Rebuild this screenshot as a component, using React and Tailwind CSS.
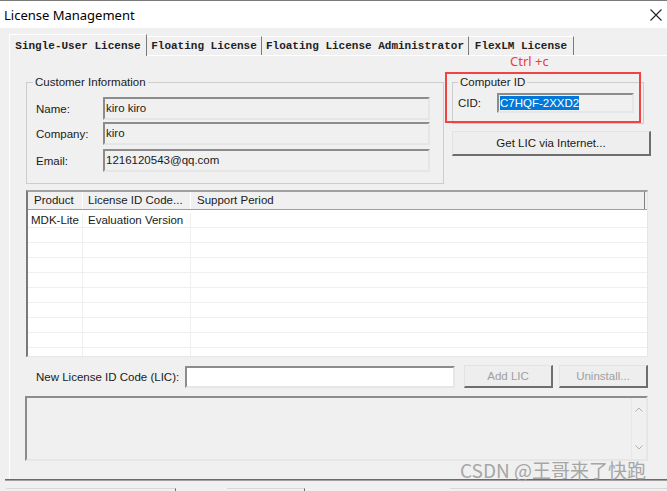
import React from 'react';

// Win32-style edges
const sunken =
  'border-2 border-t-[#8c8c8c] border-l-[#8c8c8c] border-r-[#e6e6e6] border-b-[#e6e6e6]';
const raised =
  'border border-t-[#e3e3e3] border-l-[#e3e3e3] border-r-2 border-b-2 border-r-[#6e6e6e] border-b-[#6e6e6e] bg-[#eeeeee]';

const TABS = [
  { label: 'Single-User License', cls: 'w-[138px] h-[22px] mb-[-1px] relative z-10 bg-[#f0f0f0] border-l border-l-white' },
  { label: 'Floating License', cls: 'w-[115px] h-[19px]' },
  { label: 'Floating License Administrator', cls: 'w-[207px] h-[19px]' },
  { label: 'FlexLM License', cls: 'w-[105px] h-[19px]' },
];

const ROWS = Array.from({ length: 10 }, (_, i) =>
  i === 0 ? ['MDK-Lite', 'Evaluation Version', ''] : ['', '', '']
);

const Field = ({ label, value }) => (
  <div className="flex h-[23px] items-center">
    <span className="w-[67px]">{label}</span>
    <div className={`h-[23px] w-[327px] pl-[1px] pt-[2px] ${sunken}`}>{value}</div>
  </div>
);

export default function App() {
  return (
    <div className="relative h-[491px] w-[667px] overflow-hidden bg-[#f0f0f0] font-['Liberation_Sans',Arial,sans-serif] text-[11.5px] leading-[14px] text-[#1a1a1a]">
      {/* title bar */}
      <div className="flex h-[28px] items-center justify-between border-t border-[#7a7a7a] bg-white pl-[4px] pr-[4px]">
        <span className="font-['Noto_Sans',sans-serif] text-[13px] text-black">License Management</span>
        <svg width="12" height="12" viewBox="0 0 12 12" className="mr-[1px] mt-[1px]">
          <path d="M0.5 0.5L11.5 11.5M11.5 0.5L0.5 11.5" stroke="#222" strokeWidth="1.1" />
        </svg>
      </div>

      {/* tab strip */}
      <div className="mt-[6px] flex h-[21px] items-end pl-[9px]">
        {TABS.map((t) => (
          <div
            key={t.label}
            className={`flex items-center justify-center border-t border-t-white border-r border-r-[#7a7a7a] font-['Liberation_Mono',monospace] text-[11px] font-semibold text-[#222] ${t.cls}`}
          >
            {t.label}
          </div>
        ))}
      </div>

      {/* tab page */}
      <div className="ml-[9px] h-[424px] border-l border-t border-white pl-[16px] pt-[19px]">
        <div className="flex items-start gap-[8px]">
          <fieldset className="h-[109px] w-[418px] border border-[#cdcdcd] pl-[9px] pt-[8px]">
            <legend className="ml-[-3px] px-[2px]">Customer Information</legend>
            <Field label="Name:" value="kiro kiro" />
            <div className="mt-[2px]">
              <Field label="Company:" value="kiro" />
            </div>
            <div className="mt-[4px]">
              <Field label="Email:" value="1216120543@qq.com" />
            </div>
          </fieldset>

          <div className="flex w-[199px] flex-col">
            <fieldset className="h-[49px] w-[192px] border border-[#cdcdcd] pl-[5px] pt-[4px]">
              <legend className="ml-0 px-[2px]">Computer ID</legend>
              <div className="flex items-center">
                <span className="w-[39px]">CID:</span>
                <div className={`h-[20px] w-[137px] pl-[1px] pt-[1px] ${sunken}`}>
                  <span className="bg-[#0078d7] py-[1px] text-white">C7HQF-2XXD2</span>
                </div>
              </div>
            </fieldset>
            <button className={`mt-[7px] h-[25px] w-[199px] text-[#1a1a1a] ${raised}`}>
              Get LIC via Internet...
            </button>
          </div>
        </div>

        {/* license list */}
        <div className="mt-[6px] h-[167px] w-[622px] overflow-hidden border-l-2 border-t-2 border-r border-b border-l-[#7a7a7a] border-t-[#a0a0a0] border-r-[#e6e6e6] border-b-[#e6e6e6] bg-white">
          <div className="flex h-[18px] border-b border-[#a0a0a0] bg-[#f0f0f0]">
            <div className="w-[55px] border-r border-white pl-[6px] pt-[1px]">Product</div>
            <div className="w-[108px] border-r border-white pl-[5px] pt-[1px]">License ID Code...</div>
            <div className="flex-1 border-r border-[#808080] pl-[6px] pt-[1px] mr-[2px]">Support Period</div>
          </div>
          <div className="mt-[3px]">
            {ROWS.map((r, i) => (
              <div key={i} className="flex h-[15px] border-b border-[#efefef]">
                <div className="w-[55px] border-r border-[#efefef] pl-[3px]">{r[0]}</div>
                <div className="w-[108px] border-r border-[#efefef] pl-[5px]">{r[1]}</div>
                <div className="flex-1 pl-[6px]">{r[2]}</div>
              </div>
            ))}
          </div>
        </div>

        {/* new LIC row */}
        <div className="mt-[8px] flex h-[23px] items-center pl-[10px]">
          <span className="w-[149px]">New License ID Code (LIC):</span>
          <div className={`h-[22px] w-[270px] bg-white ${sunken}`} />
          <button className={`ml-[9px] h-[23px] w-[89px] text-[#a0a0a0] ${raised}`}>Add LIC</button>
          <button className={`ml-[6px] h-[23px] w-[89px] text-[#a0a0a0] ${raised}`}>Uninstall...</button>
        </div>

        {/* output area */}
        <div className={`ml-[-1px] mt-[8px] flex h-[65px] w-[623px] justify-end ${sunken}`}>
          <div className="flex w-[15px] flex-col items-center justify-between border-l border-[#e8e8e8] py-[9px]">
            <svg width="8" height="5" viewBox="0 0 8 5">
              <path d="M0.5 4.5L4 1L7.5 4.5" fill="none" stroke="#b0b0b0" strokeWidth="1" />
            </svg>
            <svg width="8" height="5" viewBox="0 0 8 5">
              <path d="M0.5 0.5L4 4L7.5 0.5" fill="none" stroke="#b0b0b0" strokeWidth="1" />
            </svg>
          </div>
        </div>
      </div>

      {/* dialog bottom edge + button tops */}
      <div className="ml-[5px] h-[2px] border-t border-[#6a6a6a] bg-[#a0a0a0]" />
      <div className="mt-[7px] flex">
        <div className="ml-[6px] h-[10px] w-[170px] border-t border-r border-t-[#d8d8d8] border-r-[#6a6a6a]" />
        <div className="ml-[51px] h-[10px] w-[78px] border-t border-r border-t-[#d8d8d8] border-r-[#6a6a6a]" />
        <div className="ml-[145px] h-[10px] flex-1 border-t border-t-[#d8d8d8]" />
      </div>

      {/* annotations laid over the dialog */}
      <span className="absolute left-[510px] top-[53px] font-['Noto_Sans',sans-serif] text-[13px] leading-[16px] text-[#f03c3c]">
        Ctrl +c
      </span>
      <div className="absolute left-[445px] top-[72px] h-[51px] w-[196px] border-2 border-[#f04444]" />
      <span className="absolute left-[460px] top-[459px] font-['Noto_Sans_CJK_SC',sans-serif] text-[19px] leading-[22px] text-[#a6a6a6]">
        CSDN @王哥来了快跑
      </span>
    </div>
  );
}
